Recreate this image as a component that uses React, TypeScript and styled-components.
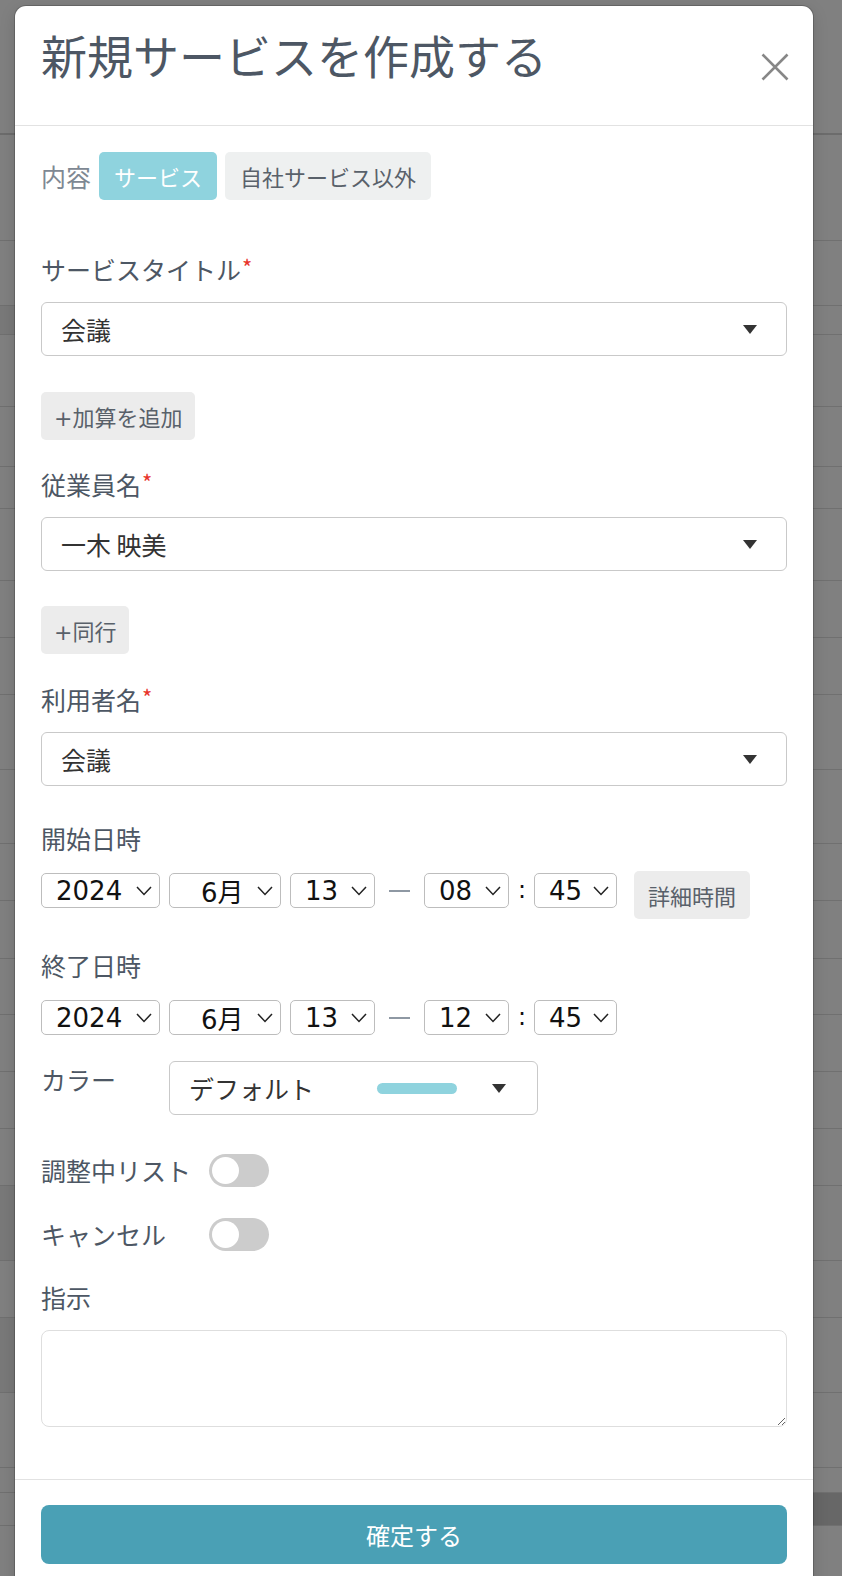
import styled, { createGlobalStyle } from 'styled-components'

const GlobalStyle = createGlobalStyle`
  html, body {
    margin: 0;
    padding: 0;
  }
  body {
    width: 842px;
    height: 1576px;
    overflow: hidden;
    background: #808080;
    font-family: "Noto Sans CJK JP", "Noto Sans", sans-serif;
  }
  * {
    box-sizing: border-box;
  }
`

// rows of the list page that sits behind the dim overlay
const bgRows = [
  { h: 135, left: 0, right: 0 },
  { h: 106, left: 0, right: 0 },
  { h: 65, left: 0, right: 0 },
  { h: 29, left: 1, right: 0 },
  { h: 72, left: 0, right: 0 },
  { h: 60, left: 0, right: 0 },
  { h: 42, left: 0, right: 0 },
  { h: 72, left: 0, right: 0 },
  { h: 57, left: 0, right: 0 },
  { h: 57, left: 0, right: 0 },
  { h: 75, left: 0, right: 0 },
  { h: 74, left: 0, right: 0 },
  { h: 57, left: 0, right: 0 },
  { h: 58, left: 0, right: 0 },
  { h: 56, left: 0, right: 0 },
  { h: 57, left: 0, right: 0 },
  { h: 57, left: 0, right: 0 },
  { h: 57, left: 0, right: 0 },
  { h: 75, left: 1, right: 0 },
  { h: 57, left: 0, right: 0 },
  { h: 75, left: 1, right: 0 },
  { h: 75, left: 0, right: 0 },
  { h: 25, left: 0, right: 0 },
  { h: 33, left: 0, right: 2 },
  { h: 60, left: 0, right: 0 },
]

const tones = ['#808080', '#797979', '#676767']

const Page = styled.div`
  position: relative;
  width: 842px;
  height: 1576px;
  overflow: hidden;
`

const BgTable = styled.div`
  display: flex;
  flex-direction: column;
`

const BgRow = styled.div<{ $h: number; $first?: boolean }>`
  display: flex;
  height: ${(p) => p.$h}px;
  border-bottom: ${(p) => (p.$first ? '2px solid #6c6c6c' : '1px solid #707070')};
`

const BgCell = styled.div<{ $tone: number }>`
  flex: 1;
  background: ${(p) => tones[p.$tone]};
`

const Modal = styled.div`
  position: absolute;
  left: 15px;
  top: 6px;
  width: 798px;
  height: 1620px;
  background: #fff;
  border-radius: 11px 11px 0 0;
  box-shadow: 0 0 0 1px rgba(0, 0, 0, 0.18), 0 4px 16px rgba(0, 0, 0, 0.15);
  display: flex;
  flex-direction: column;
`

const Header = styled.div`
  height: 120px;
  flex-shrink: 0;
  display: flex;
  justify-content: space-between;
  align-items: flex-start;
  padding: 20px 24px 0 26px;
  border-bottom: 1px solid #e2e2e2;
`

const Title = styled.h1`
  margin: 0;
  font-size: 46px;
  line-height: 56px;
  font-weight: 400;
  color: #4d5764;
`

const CloseButton = styled.button`
  margin-top: 27px;
  padding: 0;
  border: none;
  background: transparent;
  width: 28px;
  height: 28px;
  display: flex;
  cursor: pointer;
`

const Body = styled.div`
  display: flex;
  flex-direction: column;
  padding: 26px 26px 52px;
`

const TypeRow = styled.div`
  display: flex;
  align-items: center;
  gap: 8px;
`

const TypeCaption = styled.span`
  font-size: 25px;
  line-height: 36px;
  color: #7e8893;
`

const Chip = styled.button<{ $active?: boolean }>`
  height: 48px;
  padding: 0 15px;
  border: none;
  border-radius: 5px;
  font-family: inherit;
  font-size: 22px;
  background: ${(p) => (p.$active ? '#8fd3de' : '#eef0f0')};
  color: ${(p) => (p.$active ? '#ffffff' : '#59616a')};
  cursor: pointer;
`

const Label = styled.div<{ $mt: number }>`
  margin-top: ${(p) => p.$mt}px;
  margin-bottom: 15px;
  font-size: 25px;
  line-height: 36px;
  color: #4d5764;
`

const Required = styled.span`
  color: #e8342b;
  font-size: 22px;
  line-height: 1;
  vertical-align: top;
  margin-left: 1px;
  position: relative;
  top: 4px;
`

const SelectBox = styled.div<{ $width?: number; $pr?: number }>`
  width: ${(p) => (p.$width ? `${p.$width}px` : '100%')};
  height: 54px;
  display: flex;
  align-items: center;
  padding: 0 ${(p) => p.$pr ?? 29}px 0 19px;
  border: 1px solid #c9c9c9;
  border-radius: 6px;
  background: #fff;
  font-size: 25px;
  color: #333;
`

const SelectText = styled.span`
  flex: 1;
`

const AddButton = styled.button<{ $mt?: number }>`
  align-self: flex-start;
  margin-top: ${(p) => p.$mt ?? 0}px;
  height: 48px;
  padding: 0 13px;
  border: none;
  border-radius: 5px;
  background: #ececec;
  font-family: "DejaVu Sans", "Noto Sans CJK JP", sans-serif;
  font-size: 22px;
  color: #59616a;
  cursor: pointer;
`

const DateRow = styled.div`
  display: flex;
  align-items: flex-start;
  gap: 9px;
`

const DateSelect = styled.div<{ $width: number; $pl?: number }>`
  width: ${(p) => p.$width}px;
  height: 35px;
  margin-top: 2px;
  display: flex;
  align-items: center;
  justify-content: space-between;
  padding: 0 7px 0 ${(p) => p.$pl ?? 14}px;
  border: 1px solid #bdbdbd;
  border-radius: 5px;
  background: #fff;
  font-family: "DejaVu Sans", "Noto Sans CJK JP", sans-serif;
  font-size: 26px;
  color: #111;
`

const Dash = styled.div`
  width: 31px;
  height: 39px;
  display: flex;
  align-items: center;
  justify-content: center;
  &::before {
    content: '';
    width: 21px;
    height: 2px;
    background: #8e98a3;
  }
`

const Colon = styled.div`
  width: 7px;
  line-height: 39px;
  font-family: "DejaVu Sans", sans-serif;
  font-size: 24px;
  color: #111;
  text-align: center;
`

const DetailButton = styled(AddButton)`
  margin-left: 8px;
  padding: 0 14px;
  font-family: "Noto Sans CJK JP", sans-serif;
`

const ColorRow = styled.div`
  display: flex;
  align-items: flex-start;
  margin-top: 24px;
`

const SideLabel = styled.div<{ $width: number; $lh?: number }>`
  width: ${(p) => p.$width}px;
  flex-shrink: 0;
  font-size: 25px;
  line-height: ${(p) => p.$lh ?? 36}px;
  color: #4d5764;
`

const ColorSwatch = styled.span`
  width: 80px;
  height: 11px;
  border-radius: 6px;
  background: #8fd3de;
  margin-right: 35px;
`

const ToggleRow = styled.div<{ $mt: number }>`
  display: flex;
  align-items: center;
  margin-top: ${(p) => p.$mt}px;
`

const Track = styled.div`
  width: 60px;
  height: 33px;
  padding: 3px;
  border-radius: 17px;
  background: #cccccc;
  display: flex;
  align-items: center;
`

const Knob = styled.div`
  width: 27px;
  height: 27px;
  border-radius: 50%;
  background: #fff;
`

const Memo = styled.textarea`
  width: 100%;
  height: 97px;
  border: 1px solid #dedede;
  border-radius: 8px;
  padding: 10px 14px;
  font-family: inherit;
  font-size: 22px;
  resize: vertical;
  outline: none;
`

const Footer = styled.div`
  border-top: 1px solid #e2e2e2;
  padding: 25px 26px 30px;
`

const SubmitButton = styled.button`
  width: 100%;
  height: 59px;
  border: none;
  border-radius: 8px;
  background: #4aa0b5;
  color: #fff;
  font-family: inherit;
  font-size: 24px;
  cursor: pointer;
`

const Caret = () => (
  <svg width="14" height="9" viewBox="0 0 14 9">
    <path d="M0 0 H14 L7 9 Z" fill="#333" />
  </svg>
)

const Chevron = () => (
  <svg width="16" height="10" viewBox="0 0 16 10">
    <path d="M1 1 L8 8.5 L15 1" fill="none" stroke="#222" strokeWidth="1.5" />
  </svg>
)

const Toggle = () => (
  <Track>
    <Knob />
  </Track>
)

type DatePart = { value: string; width: number; pl?: number }

const DateTimeRow = ({ parts, withDetail }: { parts: DatePart[]; withDetail?: boolean }) => {
  const [y, m, d, h, min] = parts
  const cell = (p: DatePart) => (
    <DateSelect $width={p.width} $pl={p.pl}>
      <span>{p.value}</span>
      <Chevron />
    </DateSelect>
  )
  return (
    <DateRow>
      {cell(y)}
      {cell(m)}
      {cell(d)}
      <Dash />
      {cell(h)}
      <Colon>:</Colon>
      {cell(min)}
      {withDetail && <DetailButton>詳細時間</DetailButton>}
    </DateRow>
  )
}

const App = () => {
  return (
    <>
      <GlobalStyle />
      <Page>
        <BgTable>
          {bgRows.map((r, i) => (
            <BgRow key={i} $h={r.h} $first={i === 0}>
              <BgCell $tone={r.left} />
              <BgCell $tone={r.right} />
            </BgRow>
          ))}
        </BgTable>

        <Modal>
          <Header>
            <Title>新規サービスを作成する</Title>
            <CloseButton aria-label="close">
              <svg width="28" height="28" viewBox="0 0 28 28">
                <path d="M1.5 1.5 L26.5 26.5 M26.5 1.5 L1.5 26.5" stroke="#878787" strokeWidth="2.6" />
              </svg>
            </CloseButton>
          </Header>

          <Body>
            <TypeRow>
              <TypeCaption>内容</TypeCaption>
              <Chip $active>サービス</Chip>
              <Chip>自社サービス以外</Chip>
            </TypeRow>

            <Label $mt={51}>
              サービスタイトル<Required>*</Required>
            </Label>
            <SelectBox>
              <SelectText>会議</SelectText>
              <Caret />
            </SelectBox>
            <AddButton $mt={36}>+加算を追加</AddButton>

            <Label $mt={26}>
              従業員名<Required>*</Required>
            </Label>
            <SelectBox>
              <SelectText>一木 映美</SelectText>
              <Caret />
            </SelectBox>
            <AddButton $mt={35}>+同行</AddButton>

            <Label $mt={27}>
              利用者名<Required>*</Required>
            </Label>
            <SelectBox>
              <SelectText>会議</SelectText>
              <Caret />
            </SelectBox>

            <Label $mt={34}>開始日時</Label>
            <DateTimeRow
              withDetail
              parts={[
                { value: '2024', width: 119 },
                { value: '6月', width: 112, pl: 31 },
                { value: '13', width: 85 },
                { value: '08', width: 85 },
                { value: '45', width: 83 },
              ]}
            />

            <Label $mt={28}>終了日時</Label>
            <DateTimeRow
              parts={[
                { value: '2024', width: 119 },
                { value: '6月', width: 112, pl: 31 },
                { value: '13', width: 85 },
                { value: '12', width: 85 },
                { value: '45', width: 83 },
              ]}
            />

            <ColorRow>
              <SideLabel $width={128}>カラー</SideLabel>
              <SelectBox $width={369} $pr={31}>
                <SelectText>デフォルト</SelectText>
                <ColorSwatch />
                <Caret />
              </SelectBox>
            </ColorRow>

            <ToggleRow $mt={39}>
              <SideLabel $width={168} $lh={33}>
                調整中リスト
              </SideLabel>
              <Toggle />
            </ToggleRow>
            <ToggleRow $mt={31}>
              <SideLabel $width={168} $lh={33}>
                キャンセル
              </SideLabel>
              <Toggle />
            </ToggleRow>

            <Label $mt={28}>指示</Label>
            <Memo />
          </Body>

          <Footer>
            <SubmitButton>確定する</SubmitButton>
          </Footer>
        </Modal>
      </Page>
    </>
  )
}

export default App
